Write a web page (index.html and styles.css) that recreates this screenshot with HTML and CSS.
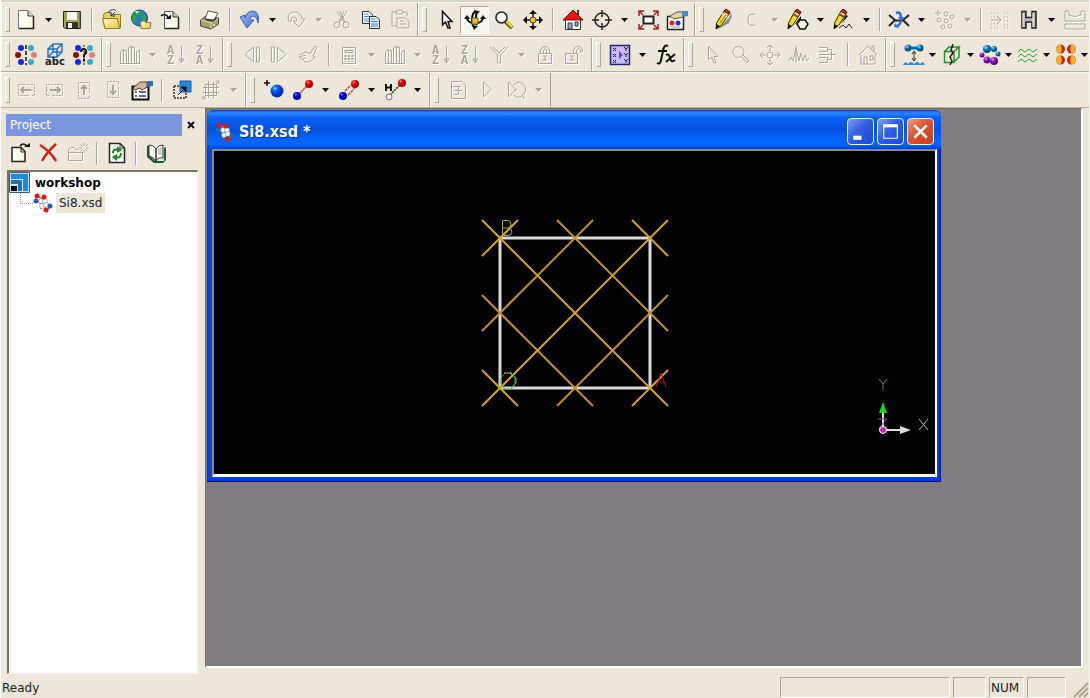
FILE: index.html
```html
<!DOCTYPE html>
<html lang="en">
<head>
<meta charset="utf-8">
<title>Si8.xsd - workshop</title>
<link rel="stylesheet" href="styles.css">
</head>
<body>
<svg class="defs" aria-hidden="true">
<defs>
<linearGradient id="gold" x1="0" y1="0" x2="1" y2="1"><stop offset="0" stop-color="#fffbb0"/><stop offset="1" stop-color="#e0c850"/></linearGradient>
<linearGradient id="sky" x1="0" y1="0" x2="1" y2="1"><stop offset="0" stop-color="#a9c4f5"/><stop offset="1" stop-color="#3a63cc"/></linearGradient>
<linearGradient id="paper" x1="0" y1="0" x2="1" y2="1"><stop offset="0" stop-color="#fff"/><stop offset=".6" stop-color="#fffff2"/><stop offset="1" stop-color="#f2f1b8"/></linearGradient>
<radialGradient id="bball" cx=".35" cy=".3"><stop offset="0" stop-color="#9cf"/><stop offset=".4" stop-color="#06f"/><stop offset="1" stop-color="#03b"/></radialGradient>
<radialGradient id="nball" cx=".35" cy=".3"><stop offset="0" stop-color="#88f"/><stop offset=".4" stop-color="#11d"/><stop offset="1" stop-color="#00a"/></radialGradient>
<radialGradient id="rball" cx=".35" cy=".3"><stop offset="0" stop-color="#f99"/><stop offset=".4" stop-color="#e11"/><stop offset="1" stop-color="#a00"/></radialGradient>
<radialGradient id="cball" cx=".35" cy=".3"><stop offset="0" stop-color="#bef"/><stop offset=".5" stop-color="#18d"/><stop offset="1" stop-color="#057"/></radialGradient>
<radialGradient id="pball" cx=".35" cy=".3"><stop offset="0" stop-color="#d9f"/><stop offset=".5" stop-color="#92c"/><stop offset="1" stop-color="#517"/></radialGradient>
</defs>
<symbol id="new" viewBox="0 0 24 24"><path d="M4.500 2.500H14L19.500 8V20.500H4.500Z" fill="url(#paper)" stroke="#777"/><path d="M14 3V8H19" fill="#ddd" stroke="#333"/><path d="M5 20.500H19.500V8" fill="none" stroke="#222" stroke-width="1.500"/></symbol>
<symbol id="save" viewBox="0 0 24 24"><path d="M3.500 3.500H20.500V20.500H5L3.500 19Z" fill="#a3a35a" stroke="#222"/><path d="M7 4H17V12H7Z" fill="#f4f4f0"/><path d="M6 14H18V20H6Z" fill="#333"/><path d="M8 15H12V20H8Z" fill="#eee"/><path d="M20 4V20" stroke="#444"/></symbol>
<symbol id="open" viewBox="0 0 24 24"><path d="M3.500 6.500L6 4.500H10L12 6.500H20.500V19.500H4.500Z" fill="#e8d366" stroke="#857626"/><path d="M2.500 10.500H17L20 20.500H5Z" fill="url(#gold)" stroke="#857626"/><path d="M8 5C10 1 15 1 16 3M11 4V8H15M11 8L15 4" fill="none" stroke="#333"/></symbol>
<symbol id="globe" viewBox="0 0 24 24"><circle cx="10.500" cy="10" r="8" fill="#2d77d2" stroke="#124a78"/><path d="M5 5Q9 1 13 4L11 8L7 9L8 13L5 15Q1 9 5 5M13 8L17 7V12L14 14L12 11Z" fill="#26a344"/><path d="M6 3L10 3L8 6Z" fill="#bff"/><path d="M11.500 14.500L13 13H16L17 14.500H22L21 20.500H12Z" fill="url(#gold)" stroke="#8e7a48"/></symbol>
<symbol id="import" viewBox="0 0 24 24"><path d="M6.500 3.500H15L20.500 9V20.500H6.500Z" fill="url(#paper)" stroke="#555"/><path d="M15 4V9H20" fill="#ccc" stroke="#333"/><path d="M20.500 9V20.500H7" fill="none" stroke="#222" stroke-width="1.500"/><path d="M3 8Q8 4 11 11" fill="none" stroke="#111" stroke-width="1.500"/><path d="M7.500 11H13V6.500Z"/></symbol>
<symbol id="print" viewBox="0 0 24 24"><path d="M2.500 12L8 8L20.500 10V16L13 21L2.500 18Z" fill="#a5a36c" stroke="#444"/><path d="M3 12L13 15L20 10.500M13 15V20.500" fill="none" stroke="#dcd9a4"/><path d="M7 11L10 3L20 5L16 12Z" fill="#fff" stroke="#555"/><path d="M7.500 11.500L15 13L18 10" stroke="#333" stroke-width="1.500" fill="none"/><circle cx="16" cy="17" r="1" fill="#ef5"/></symbol>
<symbol id="undo" viewBox="0 0 24 24"><path d="M2 9L7 7V10Q9 3 15 3Q22 4 20 15Q19 9 15 8Q12 8 12 12L16 12L9 20Z" fill="url(#sky)" stroke="#3b5bb0"/></symbol>
<symbol id="redo" viewBox="0 0 24 24"><path d="M4 10Q4 4 11 4Q17 4 18 11H21L15 19L9 13H13Q13 9 10 9Q7 9 7 14Q4 14 4 10Z"/></symbol>
<symbol id="cut" viewBox="0 0 24 24"><path d="M7 3L14 14M17 3L10 14M10 3L15 14M14 3L9 14"/><circle cx="7" cy="17" r="3"/><circle cx="16" cy="17" r="3"/></symbol>
<symbol id="copy" viewBox="0 0 24 24"><path d="M3.500 3.500H10L13.500 7V15.500H3.500Z" fill="#fff" stroke="#234"/><path d="M5 6H9M5 8.500H11M5 11H11M5 13H11" stroke="#58c"/><path d="M10.500 8.500H17L20.500 12V20.500H10.500Z" fill="#e9f2ff" stroke="#234"/><path d="M12 11H16M12 13.500H19M12 16H19M12 18H19" stroke="#47b"/></symbol>
<symbol id="paste" viewBox="0 0 24 24"><path d="M9 18H4V4H8M15 4H19V8M8 6V3H10Q12 0 14 3H15V6Z"/><path d="M9 10H17L21 13V20H9ZM12 13H16M12 16H18"/></symbol>
<symbol id="pointer" viewBox="0 0 24 24"><path d="M8.500 3.500V17L11.500 14L14 20H16L14 13.500H18Z" fill="#fff" stroke="#111" stroke-width="1.500"/></symbol>
<symbol id="pointerg" viewBox="0 0 24 24"><path d="M8.500 3.500V17L11.500 14L14 20H16L14 13.500H18Z"/></symbol>
<symbol id="rotate" viewBox="0 0 24 24"><path d="M12.500 3.500Q9 5 9 12Q9 18 12 20M14 4Q12 9 14 17M4 9Q4 15 12 15.500Q20 15 20 9" fill="none" stroke="#111" stroke-width="2"/><path d="M11 2L17 3.500L13 7ZM1 11L4 7L7 11ZM17 11L20 7L23 11ZM9 17L15 18L11 22Z"/><path d="M9 10H15V16H9Z" fill="#e8c422" stroke="#654"/></symbol>
<symbol id="zoom" viewBox="0 0 24 24"><path d="M13 13L20 20" stroke="#665b00" stroke-width="4"/><path d="M14 13L20 19" stroke="#f3e33c" stroke-width="2"/><circle cx="9.500" cy="9.500" r="5.500" fill="#f7f6ef" stroke="#222" stroke-width="1.500"/></symbol>
<symbol id="zoomg" viewBox="0 0 24 24"><circle cx="9.500" cy="9" r="5.500"/><path d="M13 14L18 20L20 18L14 12"/></symbol>
<symbol id="move" viewBox="0 0 24 24"><path d="M12 4V20M4 12H20" stroke="#111" stroke-width="1.500"/><path d="M12 2L16 6H8ZM12 22L16 18H8ZM2 12L6 8V16ZM22 12L18 8V16Z"/><circle cx="12" cy="12" r="3" fill="#f0c81c" stroke="#543"/></symbol>
<symbol id="moveg" viewBox="0 0 24 24"><path d="M12 3V8M12 16V21M3 12H8M16 12H21M9 5L12 2L15 5M9 19L12 22L15 19M5 9L2 12L5 15M19 9L22 12L19 15"/><circle cx="12" cy="12" r="3"/></symbol>
<symbol id="home" viewBox="0 0 24 24"><path d="M4.500 10V21.500H19.500V10" fill="#fff" stroke="#333"/><path d="M16 2H18V7H16Z" fill="#333"/><path d="M2 12L12 2L22 12Z" fill="#e81313" stroke="#711"/><path d="M7 15H11V21H7ZM14 14H17V18H14Z" fill="#9ab" stroke="#333"/></symbol>
<symbol id="homeg" viewBox="0 0 24 24"><path d="M3 12L12 3L21 12M5 12V21H19V12M16 6V3H18V9M8 21V14H11V21M14 13H17V17H14Z"/></symbol>
<symbol id="center" viewBox="0 0 24 24"><circle cx="12" cy="12" r="7" fill="none" stroke="#222" stroke-width="1.500"/><path d="M12 2V9M12 15V22M2 12H9M15 12H22" stroke="#222" stroke-width="1.500"/></symbol>
<symbol id="fit" viewBox="0 0 24 24"><path d="M7.500 8.500H17.500V15.500H7.500Z" fill="#fff" stroke="#222" stroke-width="2"/><path d="M3 8V3H8M17 3H22V8M22 16V21H17M8 21H3V16M3 3L7 7M22 3L18 7M22 21L18 17M3 21L7 17" fill="none" stroke="#a22222" stroke-width="1.500"/></symbol>
<symbol id="propm" viewBox="0 0 24 24"><path d="M2.500 8.500H18.500V21.500H2.500Z" fill="#fff" stroke="#222" stroke-width="1.500"/><circle cx="7" cy="15" r="2.500" fill="#d22"/><circle cx="13" cy="15" r="2.500" fill="#23c"/><path d="M6 19H15" stroke="#999"/><path d="M5 8L12 4H18V9L9 11Z" fill="#e8d69a" stroke="#554"/><path d="M17 3H23V8L17 9Z" fill="#4a88bd"/></symbol>
<symbol id="props" viewBox="0 0 24 24"><path d="M2.500 8.500H18.500V21.500H2.500Z" fill="#fff" stroke="#111" stroke-width="2"/><path d="M5 14H7M9 14H16M5 18H7M9 18H16" stroke="#223a78" stroke-width="1.500"/><path d="M3 10L10 4H17V9L12 12L10 10L5 12Z" fill="#d3b995" stroke="#554434"/><path d="M17 3H23V8L17 9Z" fill="#2e6db2"/></symbol>
<symbol id="pencil" viewBox="0 0 24 24"><path d="M7 21L18 10L20 5L21 8L18 15Z" fill="#888"/><path d="M5.500 15L13 3L18 6L10 18L5 21Z" fill="#f5d722" stroke="#3a2c00"/><path d="M13 3L15 1L19 4L18 6Z" fill="#d22" stroke="#511"/><path d="M11 6L16 9" stroke="#eee" stroke-width="2"/><path d="M9 15L15 7" stroke="#a87a00"/><path d="M5 21L5 16L9 18Z"/></symbol>
<symbol id="pencilring" viewBox="0 0 24 24"><path d="M2.500 15L9 3L14 6L7 17L2 21Z" fill="#f5d722" stroke="#3a2c00"/><path d="M9 3L11 1L15 4L14 6Z" fill="#d22" stroke="#511"/><path d="M7 6L12 9" stroke="#555" stroke-width="2"/><path d="M2 21V16L6 18ZM8 17L15 8L15 11Z"/><path d="M14 12H19L22 16L19 21H14L11 16Z" fill="#f6f4e8" stroke="#111" stroke-width="1.500"/></symbol>
<symbol id="pencilwave" viewBox="0 0 24 24"><path d="M2.500 15L9 3L14 6L7 17L2 21Z" fill="#f5d722" stroke="#3a2c00"/><path d="M9 3L11 1L15 4L14 6Z" fill="#d22" stroke="#511"/><path d="M7 6L12 9" stroke="#555" stroke-width="2"/><path d="M2 21V16L6 18ZM9 16L14 7L16 8Z"/><path d="M7 20L11 17L14 20L17 16L20 20" fill="none" stroke="#222"/></symbol>
<symbol id="carbon" viewBox="0 0 24 24"><path d="M15 7Q8 4 8 12Q8 19 15 17"/></symbol>
<symbol id="clean" viewBox="0 0 24 24"><path d="M2 7L8 12L2 18M22 7L16 12L22 18M7 12.500H17" fill="none" stroke="#222" stroke-width="2"/><path d="M9 5Q14 3 14 10Q14 17 10 18" fill="none" stroke="#2573d8" stroke-width="2.500"/><path d="M11 9H17L14 13ZM8 15L12 20L7 19Z" fill="#2573d8"/></symbol>
<symbol id="atoms" viewBox="0 0 24 24"><path d="M5 2V8M2 5H8"/><circle cx="13" cy="6" r="2"/><circle cx="19" cy="9" r="2"/><circle cx="6" cy="12" r="2"/><circle cx="13" cy="13" r="2"/><circle cx="10" cy="19" r="2"/><circle cx="17" cy="18" r="2"/></symbol>
<symbol id="dots" viewBox="0 0 24 24"><path d="M3 5H11M3 9H11M3 16H11M3 20H11M16 5H22M16 9H22M16 13H22M16 17H22M16 20H22" stroke-dasharray="1 2"/><path d="M3 12H13M9 8L13 12L9 16"/></symbol>
<symbol id="hyd" viewBox="0 0 24 24"><path d="M5 3.500H9V9.500H15V3.500H19V20H15V14H9V20H5Z" fill="#b7b7b7" stroke="#222" stroke-width="1.500"/><path d="M6 5V19M16 5V19" stroke="#fff"/></symbol>
<symbol id="surface" viewBox="0 0 24 24"><path d="M2 3H6V7Q12 10 18 7V3H22V13H2ZM2 16H22V21H2Z"/></symbol>
<symbol id="sym" viewBox="0 0 24 24"><path d="M12 2V22" stroke="#111" stroke-width="1.500" stroke-dasharray="4 2"/><g fill="#1d25df"><circle cx="7" cy="5" r="3"/><circle cx="7" cy="19" r="3"/></g><circle cx="4" cy="12" r="3" fill="#851313"/><g fill="#38adc0"><circle cx="17" cy="5" r="3"/><circle cx="17" cy="19" r="3"/></g><circle cx="20" cy="12" r="3" fill="#df8080"/></symbol>
<symbol id="symq" viewBox="0 0 24 24"><path d="M12 2V22" stroke="#111" stroke-dasharray="2 1"/><g fill="#1d25df"><circle cx="6" cy="5" r="3"/><circle cx="6" cy="19" r="3"/></g><circle cx="4" cy="12" r="3" fill="#851313"/><g fill="#38adc0"><circle cx="18" cy="5" r="3"/><circle cx="18" cy="19" r="3"/></g><circle cx="20" cy="12" r="3" fill="#df8080"/><path d="M9 9Q9 6 12 6Q15 7 14 10L12 12V14M12 16V18" fill="none" stroke="#111" stroke-width="2"/></symbol>
<symbol id="cube" viewBox="0 0 24 24"><path d="M5 6L10 1H19V9L14 14H5ZM5 6H14V14M14 6L19 1M10 1V9L5 14M10 9H19" fill="none" stroke="#2772c4" stroke-width="1.500"/></symbol>
<symbol id="chart" viewBox="0 0 24 24"><path d="M2.500 20V9L5.500 6V20M5.500 7.500H8.500V20M10.500 20V5L13.500 3V20M13.500 4.500H16.500V20M18.500 20V9L21.500 7V20M2 20.500H22"/></symbol>
<symbol id="sortdown" viewBox="0 0 24 24"><path d="M17.500 3V19M15 16L17.500 20L20 16Z"/></symbol>
<symbol id="prev" viewBox="0 0 24 24"><path d="M14.500 4L6 11.500L14.500 19ZM17.500 4H20.500V19H17.500Z"/></symbol>
<symbol id="next" viewBox="0 0 24 24"><path d="M3.500 4H6.500V19H3.500ZM9.500 4V19L18 11.500Z"/></symbol>
<symbol id="hand" viewBox="0 0 24 24"><path d="M2 12L9 9L13 11L18 3L20 4L16 13L18 14Q14 20 8 19L5 16L9 15M5 16L2 14L9 12"/></symbol>
<symbol id="calc" viewBox="0 0 24 24"><path d="M5.500 4.500H18.500V20.500H5.500ZM8 7.500H16V9.500H8Z"/><path d="M8.500 12V19M12 12V19M15.500 12V19" stroke-dasharray="2 1" stroke-width="2"/></symbol>
<symbol id="filter" viewBox="0 0 24 24"><path d="M3 4L10.500 12V20H13.500V12L21 4M6 4L12 10L18 4"/></symbol>
<symbol id="lock" viewBox="0 0 24 24"><path d="M5.500 10.500H18.500V20.500H5.500ZM7.500 10V7Q12 0 16.500 7V10M13.500 10V7Q12 4 10.500 7V10M10 13H14M12 13V17M10 17H14"/></symbol>
<symbol id="unlock" viewBox="0 0 24 24"><path d="M3.500 10.500H15.500V20.500H3.500ZM11.500 10V7Q15 0 20.500 6V9H18.500V7Q16 4 14.500 7V10M8 13H12M10 13V17M8 17H12"/></symbol>
<symbol id="grid" viewBox="0 0 24 24"><path d="M2.500 2.500H21.500V21.500H2.500Z" fill="#c9bafd" stroke="#24246c" stroke-width="1.500"/><path d="M5 5L8 8M8 5L5 8M5 11L8 14M8 11L5 14M5 17L8 20M8 17L5 20M16 4L18 6L20 4M18 6V8M16 10L18 12L20 10M18 12V14M16 16L18 18L20 16M18 18V20" fill="none" stroke="#222"/><path d="M11 8L15 12L11 16Z" fill="#713ce5"/></symbol>
<symbol id="fx" viewBox="0 0 24 24"><path d="M14 3Q10 1 9 8L7 17Q6 22 3 20M4 8H13" fill="none" stroke="#111" stroke-width="2"/><path d="M12 12Q15 10 16 15Q17 20 21 17M21 11L12 19" fill="none" stroke="#111" stroke-width="2"/></symbol>
<symbol id="spectrum" viewBox="0 0 24 24"><path d="M2 18L4 14L6 18L9 5L12 18L14 10L16 18L18 12L20 18L22 15M9 2V20"/></symbol>
<symbol id="tree" viewBox="0 0 24 24"><path d="M3 4.500H11.500V8.500H3M3 14.500H11.500V19.500H3M3 11.500H20M11.500 6.500H15.500V16.500H11.500"/></symbol>
<symbol id="dock" viewBox="0 0 24 24"><path d="M6 5H18" stroke="#16c" stroke-width="3"/><path d="M12 9V17M10 11L12 8L14 11M10 15L12 18L14 15" stroke="#333" fill="none"/><g fill="url(#cball)"><circle cx="6" cy="5" r="3.500"/><circle cx="18" cy="5" r="3.500"/></g><path d="M1 22Q3 17 6 21Q9 17 12 21Q15 17 18 21Q21 17 23 22Z" fill="#278de0"/></symbol>
<symbol id="gcube" viewBox="0 0 24 24"><path d="M4.500 8.500H14V19.500H4.500ZM4.500 8.500L9 4H19L14 8.500M19 4V14L14 19" fill="none" stroke="#229329" stroke-width="1.500"/><path d="M13 1L11 7L13 10L10 14L12 18L10 22" fill="none" stroke="#222" stroke-width="1.500"/></symbol>
<symbol id="ring" viewBox="0 0 24 24"><g fill="url(#cball)"><circle cx="9" cy="6" r="4"/><circle cx="16" cy="6" r="3"/><circle cx="20" cy="11" r="2.500"/></g><g fill="url(#pball)"><circle cx="4" cy="12" r="2.500"/><circle cx="9" cy="17" r="3.500"/><circle cx="16" cy="18" r="4"/></g></symbol>
<symbol id="waves" viewBox="0 0 24 24"><path d="M2 9L5 6L9 9L13 6L17 9L21 6M2 14L5 11L9 14L13 11L17 14L21 11M2 19L5 16L9 19L13 16L17 19L21 16" fill="none" stroke="#2ba437"/></symbol>
<symbol id="orbit" viewBox="0 0 24 24"><g fill="#c02b12"><circle cx="6.500" cy="6" r="4.500"/><circle cx="17.500" cy="6" r="4.500"/><circle cx="6.500" cy="17" r="4.500"/><circle cx="17.500" cy="17" r="4.500"/></g><path d="M6.500 1.500Q9 6 6.500 10.500A4.500 4.500 0 0 1 6.500 1.500M17.500 1.500Q15 6 17.500 10.500A4.500 4.500 0 0 0 17.500 1.500M6.500 12.500Q9 17 6.500 21.500A4.500 4.500 0 0 1 6.500 12.500M17.500 12.500Q15 17 17.500 21.500A4.500 4.500 0 0 0 17.500 12.500" fill="#f5ad32"/></symbol>
<symbol id="left" viewBox="0 0 24 24"><path d="M15.500 6.500H4.500V17.500H15.500M17 6.500H20.500V17.500H17M17 12H20" stroke-dasharray="2 1"/><path d="M17 12H7M10 9L7 12L10 15" stroke-width="2"/></symbol>
<symbol id="right" viewBox="0 0 24 24"><path d="M8.500 6.500H19.500V17.500H8.500M7 6.500H3.500V17.500H7M3 12H6" stroke-dasharray="2 1"/><path d="M7 12H17M14 9L17 12L14 15" stroke-width="2"/></symbol>
<symbol id="up" viewBox="0 0 24 24"><path d="M6.500 15.500V4.500H17.500V15.500M6.500 17V20.500H17.500V17" stroke-dasharray="2 1"/><path d="M12 17V8M9 11L12 8L15 11" stroke-width="2"/></symbol>
<symbol id="down" viewBox="0 0 24 24"><path d="M6.500 8.500V19.500H17.500V8.500M6.500 7V3.500H17.500V7" stroke-dasharray="2 1"/><path d="M12 7V16M9 13L12 16L15 13" stroke-width="2"/></symbol>
<symbol id="extract" viewBox="0 0 24 24"><path d="M10 3H21V14H10Z" fill="#2389da" stroke="#185898"/><path d="M4 8V20H16V14M4 8H10" fill="none" stroke="#333" stroke-width="1.500" stroke-dasharray="2 1"/><path d="M8 17L14 11M11 9H16V14Z" stroke="#111"/></symbol>
<symbol id="crossgrid" viewBox="0 0 24 24"><path d="M9.500 3V20M14.500 4V21M4 9.500H20M4 14.500H20M6.500 6.500H17.500V17.500H6.500ZM4 21L8 17M17 6L20 3M17 3H20V6M4 18V21H7"/></symbol>
<symbol id="addatom" viewBox="0 0 24 24"><path d="M5 2V8M2 5H8" stroke="#111" stroke-width="1.500"/><circle cx="15" cy="13" r="6.500" fill="url(#bball)"/></symbol>
<symbol id="bond" viewBox="0 0 24 24"><path d="M6 18L18 6" stroke="#d25b64" stroke-width="1.500"/><circle cx="6" cy="18" r="4" fill="url(#nball)"/><circle cx="18" cy="6" r="4" fill="url(#rball)"/></symbol>
<symbol id="bond2" viewBox="0 0 24 24"><path d="M8 13L14 7M11 17L18 10" stroke="#c44" stroke-width="1.500" stroke-dasharray="3 1"/><circle cx="6" cy="18" r="4" fill="url(#nball)"/><circle cx="18" cy="6" r="4" fill="url(#rball)"/></symbol>
<symbol id="hbond" viewBox="0 0 24 24"><path d="M7 17L17 7" stroke="#222" stroke-width="1.500" stroke-dasharray="2 1"/><circle cx="6" cy="19" r="3" fill="#eee" stroke="#777"/><circle cx="19" cy="5" r="4" fill="url(#rball)"/><path d="M3 6V13M8 6V13M3 9.500H8" stroke="#111" stroke-width="2"/></symbol>
<symbol id="script" viewBox="0 0 24 24"><path d="M5.500 3.500H16L19.500 7V20.500H5.500ZM8 8.500H15M8 16.500H12M12.500 16V8M9 12.500H16"/></symbol>
<symbol id="play" viewBox="0 0 24 24"><path d="M8.500 4V19L16 11.500Z"/></symbol>
<symbol id="debug" viewBox="0 0 24 24"><path d="M4.500 4V19L12 11.500ZM10 7Q15 1 20 7Q24 13 18 18Q13 21 9 17M10 12H13M19 18L20 21"/></symbol>
<symbol id="newdoc" viewBox="0 0 24 24"><path d="M4 6.500H13L17 10.500V20.500H4Z" fill="url(#paper)" stroke="#222" stroke-width="1.500"/><path d="M13 7V11H17" fill="none" stroke="#222"/><path d="M12 5Q15 1 19 5" fill="none" stroke="#111" stroke-width="1.500"/><path d="M16 6H22V2Z"/></symbol>
<symbol id="delete" viewBox="0 0 24 24"><path d="M3 4Q13 10 19 20M19 3Q10 11 5 20" fill="none" stroke="#c92416" stroke-width="2.500"/></symbol>
<symbol id="folderg" viewBox="0 0 24 24"><path d="M2.500 18.500V8.500L4.500 6.500H8L10 8.500H12M2.500 11.500H16.500V19.500H2.500ZM18 2V5M18 9V12M13 7H16M20 7H23M14.500 3.500L16.500 5.500M21.500 3.500L19.500 5.500M14.500 10L16.500 8.500M21.500 10L19.500 8.500"/></symbol>
<symbol id="refresh" viewBox="0 0 24 24"><path d="M4.500 2.500H15L19.500 7V21.500H4.500Z" fill="#f7fff2" stroke="#222" stroke-width="1.500"/><path d="M15 3V7H19" fill="none" stroke="#333"/><path d="M8 12Q8 7 14 9M16 12Q16 18 10 16" fill="none" stroke="#178526" stroke-width="2"/><path d="M12 5L17 9L12 12ZM12 13L7 16L12 20Z" fill="#178526"/></symbol>
<symbol id="book" viewBox="0 0 24 24"><path d="M3 5L6 4V15L11 20H20V7L22 6V19L19 22H10L3 16Z" fill="#175b3b"/><path d="M5 4Q10 4 12 8V20Q10 16 5 15ZM12 8Q14 4 19 4V17Q14 16 12 20Z" fill="#fffef0" stroke="#334"/><path d="M15 7V14M17 6V14" stroke="#999"/></symbol>
<symbol id="molecule" viewBox="0 0 20 20"><g stroke="#777" stroke-width=".5"><path d="M4 7L8 11L12 8L17 14L13 18M5 3L11 8M8 11L8 16" fill="none" stroke-width="1.500"/><g fill="#fff"><circle cx="8" cy="8" r="2.500"/><circle cx="12" cy="8" r="2.500"/><circle cx="9" cy="13" r="2.500"/><circle cx="13" cy="12" r="2.500"/></g></g><g fill="#d31c1c"><circle cx="4" cy="3" r="2.500"/><circle cx="11" cy="4" r="2.500"/><circle cx="13" cy="17" r="2.500"/></g><g fill="#2561b6"><circle cx="3" cy="8" r="2.500"/><circle cx="17" cy="13" r="2.500"/></g></symbol>
<symbol id="arr" viewBox="0 0 8 4"><path d="M0 0H7L3.500 4Z"/></symbol>
</svg>

<div class="app">
<header class="toolbars">
<div class="row">
<div class="band" role="toolbar" aria-label="Standard">
<button class="tb" aria-label="New"><svg><use href="#new"/></svg></button><button class="dd" aria-label="New options"><svg><use href="#arr"/></svg></button>
<button class="tb" aria-label="Save"><svg><use href="#save"/></svg></button><i class="sep"></i>
<button class="tb" aria-label="Open"><svg><use href="#open"/></svg></button>
<button class="tb" aria-label="Open from web"><svg><use href="#globe"/></svg></button>
<button class="tb" aria-label="Import"><svg><use href="#import"/></svg></button><i class="sep"></i>
<button class="tb" aria-label="Print"><svg><use href="#print"/></svg></button><i class="sep"></i>
<button class="tb" aria-label="Undo"><svg><use href="#undo"/></svg></button><button class="dd" aria-label="Undo list"><svg><use href="#arr"/></svg></button>
<button class="tb" disabled aria-label="Redo"><svg><use href="#redo"/></svg></button><button class="dd" disabled aria-label="Redo list"><svg><use href="#arr"/></svg></button>
<button class="tb" disabled aria-label="Cut"><svg><use href="#cut"/></svg></button>
<button class="tb" aria-label="Copy"><svg><use href="#copy"/></svg></button>
<button class="tb" disabled aria-label="Paste"><svg><use href="#paste"/></svg></button>
</div>
<div class="band" role="toolbar" aria-label="3D Viewer">
<button class="tb" aria-label="Select"><svg><use href="#pointer"/></svg></button>
<button class="tb pressed" aria-pressed="true" aria-label="Rotate"><svg><use href="#rotate"/></svg></button>
<button class="tb" aria-label="Zoom"><svg><use href="#zoom"/></svg></button>
<button class="tb" aria-label="Translate"><svg><use href="#move"/></svg></button><i class="sep"></i>
<button class="tb" aria-label="Reset view"><svg><use href="#home"/></svg></button>
<button class="tb" aria-label="Recenter"><svg><use href="#center"/></svg></button><button class="dd" aria-label="Recenter options"><svg><use href="#arr"/></svg></button>
<button class="tb" aria-label="Fit to view"><svg><use href="#fit"/></svg></button>
<button class="tb" aria-label="Display style"><svg><use href="#propm"/></svg></button>
</div>
<div class="band narrow last" role="toolbar" aria-label="Sketch">
<button class="tb" aria-label="Sketch atom"><svg><use href="#pencil"/></svg></button>
<button class="tb" disabled aria-label="Element"><svg><use href="#carbon"/></svg></button><button class="dd" disabled aria-label="Element list"><svg><use href="#arr"/></svg></button>
<button class="tb" aria-label="Sketch ring"><svg><use href="#pencilring"/></svg></button><button class="dd" aria-label="Ring list"><svg><use href="#arr"/></svg></button>
<button class="tb" aria-label="Sketch fragment"><svg><use href="#pencilwave"/></svg></button><button class="dd" aria-label="Fragment list"><svg><use href="#arr"/></svg></button><i class="sep"></i>
<button class="tb" aria-label="Modify bond"><svg><use href="#clean"/></svg></button><button class="dd" aria-label="Bond list"><svg><use href="#arr"/></svg></button>
<button class="tb" disabled aria-label="Modify element"><svg><use href="#atoms"/></svg></button><button class="dd" disabled aria-label="Modify list"><svg><use href="#arr"/></svg></button><i class="sep"></i>
<button class="tb" disabled aria-label="Clean"><svg><use href="#dots"/></svg></button>
<button class="tb" aria-label="Adjust hydrogen"><svg><use href="#hyd"/></svg></button><button class="dd" aria-label="Hydrogen options"><svg><use href="#arr"/></svg></button>
<button class="tb" disabled aria-label="Surface"><svg><use href="#surface"/></svg></button>
</div>
</div>
<div class="row">
<div class="band" role="toolbar" aria-label="Symmetry">
<button class="tb" aria-label="Find symmetry"><svg><use href="#sym"/></svg></button>
<button class="tb" aria-label="Build crystal"><svg viewBox="0 0 24 24"><use href="#cube"/><text x="12" y="22" text-anchor="middle" class="abc">abc</text></svg></button>
<button class="tb" aria-label="Query symmetry"><svg><use href="#symq"/></svg></button>
</div>
<div class="band" role="toolbar" aria-label="Charts">
<button class="tb" disabled aria-label="Chart"><svg><use href="#chart"/></svg></button><button class="dd" disabled aria-label="Chart type"><svg><use href="#arr"/></svg></button>
<button class="tb" disabled aria-label="Sort ascending"><svg viewBox="0 0 24 24"><use href="#sortdown"/><text x="3" y="11" class="sort">A</text><text x="3" y="21" class="sort">Z</text></svg></button>
<button class="tb" disabled aria-label="Sort descending"><svg viewBox="0 0 24 24"><use href="#sortdown"/><text x="3" y="11" class="sort">Z</text><text x="3" y="21" class="sort">A</text></svg></button>
</div>
<div class="band" role="toolbar" aria-label="Study table">
<button class="tb" disabled aria-label="Previous"><svg><use href="#prev"/></svg></button>
<button class="tb" disabled aria-label="Next"><svg><use href="#next"/></svg></button>
<button class="tb" disabled aria-label="Edit"><svg><use href="#hand"/></svg></button><i class="sep"></i>
<button class="tb" disabled aria-label="Calculate"><svg><use href="#calc"/></svg></button><button class="dd" disabled aria-label="Calculate options"><svg><use href="#arr"/></svg></button>
<button class="tb" disabled aria-label="Plot"><svg><use href="#chart"/></svg></button><button class="dd" disabled aria-label="Plot options"><svg><use href="#arr"/></svg></button>
<button class="tb" disabled aria-label="Sort rows ascending"><svg viewBox="0 0 24 24"><use href="#sortdown"/><text x="3" y="11" class="sort">A</text><text x="3" y="21" class="sort">Z</text></svg></button>
<button class="tb" disabled aria-label="Sort rows descending"><svg viewBox="0 0 24 24"><use href="#sortdown"/><text x="3" y="11" class="sort">Z</text><text x="3" y="21" class="sort">A</text></svg></button>
<button class="tb" disabled aria-label="Filter"><svg><use href="#filter"/></svg></button><button class="dd" disabled aria-label="Filter options"><svg><use href="#arr"/></svg></button>
<button class="tb" disabled aria-label="Lock"><svg><use href="#lock"/></svg></button>
<button class="tb" disabled aria-label="Unlock"><svg><use href="#unlock"/></svg></button>
</div>
<div class="band" role="toolbar" aria-label="Functions">
<button class="tb" aria-label="Models"><svg><use href="#grid"/></svg></button><button class="dd" aria-label="Model list"><svg><use href="#arr"/></svg></button>
<button class="tb" aria-label="Function"><svg><use href="#fx"/></svg></button>
</div>
<div class="band" role="toolbar" aria-label="Chart viewer">
<button class="tb" disabled aria-label="Select in chart"><svg><use href="#pointerg"/></svg></button>
<button class="tb" disabled aria-label="Zoom chart"><svg><use href="#zoomg"/></svg></button>
<button class="tb" disabled aria-label="Pan chart"><svg><use href="#moveg"/></svg></button>
<button class="tb" disabled aria-label="Spectrum"><svg><use href="#spectrum"/></svg></button>
<button class="tb" disabled aria-label="Dendrogram"><svg><use href="#tree"/></svg></button><i class="sep"></i>
<button class="tb" disabled aria-label="Reset chart"><svg><use href="#homeg"/></svg></button>
</div>
<div class="band modules last" role="toolbar" aria-label="Modules">
<button class="tb" aria-label="Adsorption"><svg><use href="#dock"/></svg></button><button class="dd" aria-label="Adsorption tasks"><svg><use href="#arr"/></svg></button>
<button class="tb" aria-label="Amorphous cell"><svg><use href="#gcube"/></svg></button><button class="dd" aria-label="Cell tasks"><svg><use href="#arr"/></svg></button>
<button class="tb" aria-label="Blends"><svg><use href="#ring"/></svg></button><button class="dd" aria-label="Blend tasks"><svg><use href="#arr"/></svg></button>
<button class="tb" aria-label="CASTEP"><svg><use href="#waves"/></svg></button><button class="dd" aria-label="CASTEP tasks"><svg><use href="#arr"/></svg></button>
<button class="tb" aria-label="DMol3"><svg><use href="#orbit"/></svg></button><button class="dd" aria-label="DMol3 tasks"><svg><use href="#arr"/></svg></button>
</div>
</div>
<div class="row">
<div class="band" role="toolbar" aria-label="Layout">
<button class="tb" disabled aria-label="Insert left"><svg><use href="#left"/></svg></button>
<button class="tb" disabled aria-label="Insert right"><svg><use href="#right"/></svg></button>
<button class="tb" disabled aria-label="Insert above"><svg><use href="#up"/></svg></button>
<button class="tb" disabled aria-label="Insert below"><svg><use href="#down"/></svg></button>
<button class="tb" aria-label="Properties"><svg><use href="#props"/></svg></button><i class="sep"></i>
<button class="tb" aria-label="Extract"><svg><use href="#extract"/></svg></button>
<button class="tb" disabled aria-label="Grid"><svg><use href="#crossgrid"/></svg></button><button class="dd" disabled aria-label="Grid options"><svg><use href="#arr"/></svg></button>
</div>
<div class="band" role="toolbar" aria-label="Atoms and bonds">
<button class="tb" aria-label="Add atom"><svg><use href="#addatom"/></svg></button>
<button class="tb" aria-label="Bond"><svg><use href="#bond"/></svg></button><button class="dd" aria-label="Bond options"><svg><use href="#arr"/></svg></button>
<button class="tb" aria-label="Partial bond"><svg><use href="#bond2"/></svg></button><button class="dd" aria-label="Partial bond options"><svg><use href="#arr"/></svg></button>
<button class="tb" aria-label="Hydrogen bond"><svg><use href="#hbond"/></svg></button><button class="dd" aria-label="Hydrogen bond options"><svg><use href="#arr"/></svg></button>
</div>
<div class="band" role="toolbar" aria-label="Scripting">
<button class="tb" disabled aria-label="Script"><svg><use href="#script"/></svg></button>
<button class="tb" disabled aria-label="Run"><svg><use href="#play"/></svg></button>
<button class="tb" disabled aria-label="Debug"><svg><use href="#debug"/></svg></button><button class="dd" disabled aria-label="Debug options"><svg><use href="#arr"/></svg></button>
</div>
</div>
</header>

<main class="work">
<aside class="project">
<div class="caption"><h2>Project</h2><button class="shut" aria-label="Close project panel"><svg viewBox="0 0 8 8"><path d="M1 1L7 7M7 1L1 7"/></svg></button></div>
<div class="tools" role="toolbar" aria-label="Project">
<button class="tb" aria-label="New document"><svg><use href="#newdoc"/></svg></button>
<button class="tb" aria-label="Delete"><svg><use href="#delete"/></svg></button>
<button class="tb" disabled aria-label="New folder"><svg><use href="#folderg"/></svg></button><i class="sep"></i>
<button class="tb" aria-label="Refresh"><svg><use href="#refresh"/></svg></button><i class="sep"></i>
<button class="tb" aria-label="Project log"><svg><use href="#book"/></svg></button>
</div>
<div class="tree">
<div class="root"><svg viewBox="0 0 21 21"><path d="M.500 .500H20.500V20.500H.500Z" fill="#c4e3f8" stroke="#355a78"/><path d="M2 2H19V19H14V7H2Z" fill="#1d8bdd"/><path d="M2 8H13V19H9V12H2Z" fill="#286fa8"/><path d="M2 7.500H13.500V19M2 12.500H8.500V19" fill="none" stroke="#cfe9fa"/><path d="M2 14H8V19H2Z"/></svg><b>workshop</b></div>
<div class="leaf"><i class="branch"></i><svg><use href="#molecule"/></svg><span>Si8.xsd</span></div>
</div>
</aside>
<section class="desk">
<article class="window">
<div class="title"><svg class="mol"><use href="#molecule"/></svg><h1>Si8.xsd *</h1>
<button class="wb" aria-label="Minimize"><svg viewBox="0 0 24 24"><path d="M5 16H13V20H5Z" fill="#fff"/></svg></button>
<button class="wb" aria-label="Maximize"><svg viewBox="0 0 24 24"><path d="M5.500 6H18.500V18.500H5.500Z" fill="none" stroke="#fff"/><path d="M5 5H19V8H5Z" fill="#fff"/></svg></button>
<button class="wb red" aria-label="Close"><svg viewBox="0 0 24 24"><path d="M6 6L18 18M18 6L6 18" stroke="#fff" stroke-width="2.500"/></svg></button></div>
<div class="view">
<svg class="cell" viewBox="0 0 190 190" role="img" aria-label="Silicon unit cell">
<path d="M20 20H170V170H20Z" fill="none" stroke="#d9d9d9" stroke-width="3"/>
<g stroke="#bd9130" stroke-width="2"><path d="M77 2L188 113M113 2L2 113M2 77L113 188M188 77L77 188"/></g>
<g stroke="#d3a030" stroke-width="2"><path d="M2 2L188 188M188 2L2 188M38 2L2 38M152 2L188 38M2 152L38 188M188 152L152 188"/></g>
<g fill="none"><path d="M22.500 2.500V17.500H28Q32 17 32 14Q32 10 28 10H22.500M28 10Q31 9 31 6Q31 3 28 2.500H22.500" stroke="#a6a62b"/><path d="M176 169L181 155L186 169M178 164H185" stroke="#a31616"/><path d="M24 155H30L36 160V165L31 170" stroke="#a3c6a7"/><path d="M25 155L21 160V167L25 171H31L35 166V159L30 154" stroke="#2bc246"/></g>
</svg>
<svg class="axes" viewBox="0 0 60 64" role="img" aria-label="X Y Z axes">
<path d="M11 56V38M11 56H30" stroke="#ddd" stroke-width="2"/><path d="M11 28L15 39H7Z" fill="#15dc20"/><path d="M28 52L39 56L28 60Z" fill="#ddd"/>
<path d="M7 5L11 10V16M15 5L11 10" fill="none" stroke="#30a635"/><path d="M47 45L56 56M56 45L47 56" stroke="#bbb"/><path d="M6 45H15L7 54H15" fill="none" stroke="#a938a9"/><circle cx="11" cy="56" r="3.500" fill="#c324bc" stroke="#fff"/>
</svg>
</div>
</article>
</section>
</main>
<footer class="status"><span class="ready">Ready</span><span class="pane message"></span><span class="pane"></span><span class="pane num">NUM</span><span class="pane scroll"></span><svg class="size" viewBox="0 0 16 18"><path d="M1 17L15 3M6 17L15 8M11 17L15 13" stroke="#aaa48f" stroke-width="2"/></svg></footer>
</div>
</body>
</html>
```

FILE: styles.css
```css
* { box-sizing: border-box; }

body {
  margin: 0;
  background: #ece7d9;
  color: #222;
  font: 12px/16px "DejaVu Sans", sans-serif;
}

h1, h2 { margin: 0; }
button { margin: 0; padding: 0; border: 0; background: none; }
.defs { position: absolute; width: 0; height: 0; }

.app {
  display: flex;
  flex-direction: column;
  height: 100vh;
  min-height: 560px;
  overflow: hidden;
  border-left: 1px solid #fff;
  border-right: 1px solid #fff;
}

/* toolbars */
.toolbars { flex: none; padding-top: 2px; background: #d7d3c8; }
.row {
  display: flex;
  height: 35px;
  overflow: hidden;
  background: #ece7d9;
  border-top: 1px solid #faf8f2;
  border-bottom: 1px solid #b3ae9f;
}
.row:last-child { height: 36px; }
.band {
  --sep: 11px;
  position: relative;
  display: flex;
  flex: none;
  align-items: center;
  padding: 0 3px 0 12px;
  border-left: 1px solid #fff;
  border-right: 1px solid #aaa593;
}
.band:first-child { padding-left: 9px; }
.band.narrow { --sep: 9px; }
.band.modules { padding-left: 14px; }
.band.last { border-right: 0; }
.band::before {
  content: "";
  position: absolute;
  left: 3px;
  top: 4px;
  bottom: 4px;
  width: 3px;
  border: 1px solid #aca899;
  border-top-color: #fff;
  border-left-color: #fff;
}
.tb, .dd { display: flex; flex: none; align-items: center; justify-content: center; }
.tb { width: 29px; height: 28px; }
.tb svg { width: 24px; height: 24px; }
.dd { width: 17px; height: 28px; }
.dd svg { width: 8px; height: 4px; }
.modules .tb { width: 26px; }
.modules .dd { width: 12px; }
.tb:enabled svg { fill: #111; }
.tb:disabled svg {
  fill: none;
  stroke: #aaa697;
  filter: drop-shadow(1px 1px 0 #fff);
}
.dd:disabled svg { fill: #aaa697; filter: drop-shadow(1px 1px 0 #fff); }
.pressed {
  background: #f8f6f0;
  border: 1px solid #aca899;
  border-right-color: #fff;
  border-bottom-color: #fff;
}
.abc { font: bold 10px "DejaVu Sans", sans-serif; fill: #222; }
.sort { font: bold 12px "Liberation Mono", monospace; fill: #aaa697; stroke: none; }
.sep {
  flex: none;
  width: 2px;
  height: 23px;
  margin: 0 calc(var(--sep) / 2 - 1px);
  border-left: 1px solid #aca899;
  border-right: 1px solid #fff;
}

/* work area */
.work { display: flex; flex: 1; min-height: 0; }
.project {
  display: flex;
  flex: none;
  flex-direction: column;
  width: 204px;
  padding: 6px 6px 0 5px;
}
.caption { display: flex; align-items: center; height: 22px; }
.caption h2 {
  flex: 1;
  padding: 3px 4px;
  background: #7b95df;
  color: #fff;
  font-size: 12px;
  font-weight: normal;
  line-height: 16px;
}
.shut { display: flex; width: 17px; height: 16px; align-items: center; justify-content: center; }
.shut svg { width: 8px; height: 8px; stroke: #111; stroke-width: 2; }
.tools { --sep: 10px; display: flex; align-items: center; height: 34px; }
.tools .tb:first-child { width: 28px; }
.tree {
  flex: 1;
  margin: 0 1px;
  background: #fff;
  border: 2px solid #77736a;
  border-right: 1px solid #f6f4ee;
  border-bottom: 1px solid #f6f4ee;
}
.root { display: flex; align-items: center; height: 21px; gap: 5px; color: #000; }
.root svg { width: 21px; height: 21px; }
.leaf { display: flex; align-items: center; height: 20px; padding-left: 11px; }
.leaf svg { width: 20px; height: 20px; }
.leaf span { margin-left: 3px; padding: 2px 3px; background: #ece7d9; }
.branch {
  align-self: flex-start;
  width: 13px;
  height: 11px;
  border-left: 1px dotted #999;
  border-bottom: 1px dotted #999;
}

.desk {
  position: relative;
  flex: 1;
  min-width: 0;
  margin: 0 6px 6px 0;
  background: #807c80;
  border: 1px solid #716f64;
  border-right: 2px solid #fff;
  border-bottom: 2px solid #fff;
}
.window {
  position: absolute;
  left: 1px;
  top: 1px;
  width: calc(100% - 141px);
  height: calc(100% - 185px);
  display: flex;
  flex-direction: column;
  padding: 0 4px 5px 5px;
  background: #0542df;
  border-radius: 7px 7px 0 0;
  box-shadow: inset -1px -1px 0 #001b93, inset -3px -3px 0 #0838c8, inset 1px 0 0 #0831d9;
}
.title {
  display: flex;
  flex: none;
  align-items: center;
  gap: 3px;
  height: 39px;
  margin: 0 -4px 0 -5px;
  padding: 4px 7px 0 8px;
  border-radius: 7px 7px 0 0;
  background: linear-gradient(#0a45c8, #2b87ff 8%, #0a5ff0 20%, #0453e2 50%, #0667ff 82%, #0461f8 90%, #0340c4);
}
.mol { width: 20px; height: 20px; }
.title h1 {
  flex: 1;
  padding-left: 1px;
  color: #fff;
  font: bold 16px/20px "DejaVu Sans Condensed", "DejaVu Sans", sans-serif;
  text-shadow: 1px 1px 1px #02308f;
}
.wb {
  width: 27px;
  height: 27px;
  border: 1px solid #e8f0ff;
  border-radius: 4px;
  background: linear-gradient(135deg, #7f9ff3, #315ee2 45%, #174bd6);
}
.wb svg { display: block; width: 25px; height: 25px; }
.wb.red { background: linear-gradient(135deg, #ec9b84, #dc5232 45%, #c93c15); }
.view {
  position: relative;
  display: flex;
  flex: 1;
  min-height: 0;
  align-items: center;
  justify-content: center;
  background: #000;
  border: 2px solid #888b96;
  border-right-color: #fff;
  border-bottom: 3px solid #fff;
}
.cell { width: 190px; height: 190px; }
.axes { position: absolute; right: 3px; bottom: 36px; width: 60px; height: 64px; }

/* status bar */
.status { display: flex; flex: none; align-items: flex-end; gap: 3px; height: 24px; }
.ready { flex: 1; padding: 0 0 2px 1px; }
.pane {
  width: 33px;
  height: 21px;
  padding: 2px 1px;
  border: 1px solid #aca899;
  border-right-color: #fff;
  border-bottom-color: #fff;
}
.message { width: 170px; }
.num { width: 35px; }
.scroll { width: 39px; }
.size { width: 16px; height: 18px; margin-left: 4px; }
```
